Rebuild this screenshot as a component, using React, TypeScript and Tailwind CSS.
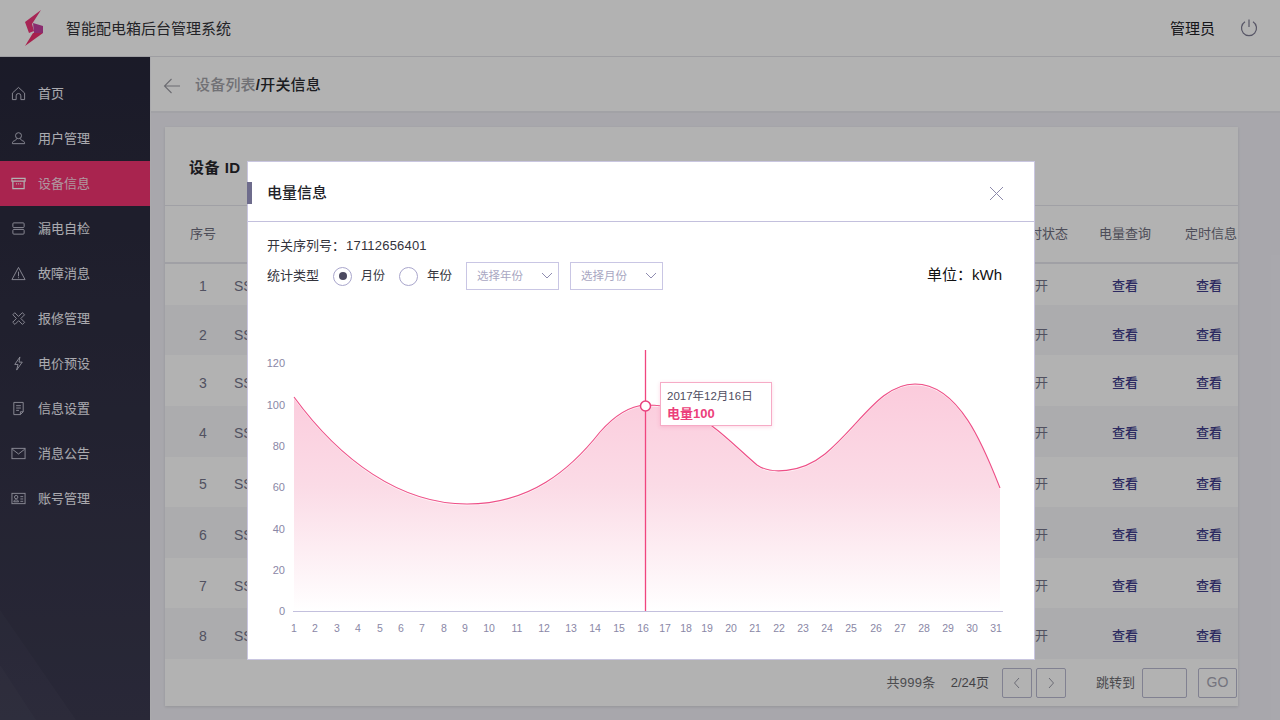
import React from "react";

const FONT = "font-['Liberation_Sans','Noto_Sans_CJK_SC',sans-serif]";

const LINE =
  "M294 397 C340 460 400 504 467 504 C530 504 570 470 600 432 C615 415 630 406 645 405 C670 405 690 410 712 426 C727 437 745 455 757 465 C770 474 800 474 825 454 C860 425 880 384 915 384 C960 384 985 450 1000 488";

const xLabels = [294, 315, 337, 358, 380, 401, 422, 444, 465, 489, 517, 544, 571, 595, 619, 643, 665, 686, 707, 731, 755, 779, 803, 827, 851, 876, 900, 924, 948, 972, 996];
const yLabels: [string, number][] = [["120", 363], ["100", 405], ["80", 446], ["60", 487], ["40", 529], ["20", 570], ["0", 611]];

function Chart() {
  return (
    <svg viewBox="248 300 786 359" className="block h-[359px] w-[786px]">
      <defs>
        <linearGradient id="area" x1="0" y1="384" x2="0" y2="611" gradientUnits="userSpaceOnUse">
          <stop offset="0" stopColor="#fbcbdc" />
          <stop offset="0.45" stopColor="#fbdbe6" />
          <stop offset="1" stopColor="#ffffff" />
        </linearGradient>
      </defs>
      <path d={`${LINE} L1000 611 L294 611 Z`} fill="url(#area)" />
      <path d={LINE} fill="none" stroke="#ffffff" strokeOpacity="0.7" transform="translate(0 1)" />
      <path d={LINE} fill="none" stroke="#ee4f87" strokeWidth="1.1" />
      <line x1="293" y1="611.5" x2="1003" y2="611.5" stroke="#c3c0dd" />
      <line x1="645.5" y1="350" x2="645.5" y2="611" stroke="#f0467f" strokeWidth="1.3" />
      <circle cx="645.5" cy="406" r="5" fill="#ffffff" stroke="#e8417d" strokeWidth="1.5" />
      {yLabels.map(([t, y]) => (
        <text key={t} x="285" y={y + 4} textAnchor="end" fontSize="11" fill="#8a87a6">{t}</text>
      ))}
      {xLabels.map((x, i) => (
        <text key={x} x={x} y="632" textAnchor="middle" fontSize="10.5" fill="#8a87a6">{i + 1}</text>
      ))}
    </svg>
  );
}

const stroke = { fill: "none", stroke: "currentColor", strokeWidth: 1 };
const icons: React.ReactNode[] = [
  <path {...stroke} d="M1.5 7.5 8 1.5l6.5 6v7h-4v-4a2.5 2.5 0 0 0-5 0v4h-4z" />,
  <g {...stroke}><circle cx="8" cy="5" r="3.2" /><path d="M5.8 8c0 1.5-1 2-3 2.8-1 .4-1.3 1.4-1.3 2.7h13c0-1.3-.3-2.3-1.3-2.7C11.200 10 10.200 9.500 10.200 8" /></g>,
  <g {...stroke} strokeWidth={1.3}><path d="M1 2.500h14v3H1z" /><path d="M2 5.500v8h12v-8" /><path d="M5.500 8.500h1M7.700 8.500h1M9.900 8.500h1" /></g>,
  <g {...stroke}><rect x="2" y="2" width="12" height="5" rx="1" /><rect x="2" y="9" width="12" height="5" rx="1" /></g>,
  <g {...stroke}><path d="M8 1.500 15 14.500H1z" /><path d="M8 6v5M8 12v1" /></g>,
  <g {...stroke}><path d="M2 4 4 1.800l4 4 4-4L14.500 4l-4 4 4 4-2.300 2.300-4-4-4 4L1.800 12l4-4z" /></g>,
  <g {...stroke}><path d="M9.500 1 4 9h3.500L6 15l6-8.500H8.500z" /></g>,
  <g {...stroke}><path d="M3 1.500h10v10l-3 3H3z" /><path d="M5.500 5h5M5.500 7.500h5M5.500 10h3M13 11.500h-3v3" /></g>,
  <g {...stroke}><rect x="1" y="2.500" width="14" height="11" /><path d="m1.500 3.500 6.500 5 6.500-5" /></g>,
  <g {...stroke}><rect x="1" y="2.500" width="14" height="11" /><circle cx="5.500" cy="6.500" r="1.800" /><path d="M3 11.500c0-1.500 1-2 2.500-2s2.500.5 2.500 2zM10 6h3M10 8.500h3M10 11h3" /></g>,
];

const nav = ["首页", "用户管理", "设备信息", "漏电自检", "故障消息", "报修管理", "电价预设", "信息设置", "消息公告", "账号管理"];

function Sidebar() {
  return (
    <aside className="relative w-[150px] shrink-0 overflow-hidden bg-gradient-to-b from-[#27273a] to-[#3b3a50] pt-[14px]">
      <svg className="absolute bottom-0 left-0 h-[110px] w-[80px]" viewBox="0 0 80 110">
        <polygon points="0,0 76,110 0,110" fill="#ffffff" fillOpacity="0.025" />
        <polygon points="0,55 36,110 0,110" fill="#ffffff" fillOpacity="0.025" />
      </svg>
      {nav.map((t, i) => (
        <div key={t} className={`relative flex h-[45px] items-center gap-[12px] pl-[11px] text-[13px] ${i === 2 ? "bg-[#f23472] text-[#fbd9e4]" : "text-[#f4f4fb]"}`}>
          <svg viewBox="0 0 16 16" className={`h-[15px] w-[15px] ${i === 2 ? "text-white" : "text-[#c9c9d8]"}`}>{icons[i]}</svg>
          <span>{t}</span>
        </div>
      ))}
    </aside>
  );
}

const rows: { n: number; cls: string }[] = [
  { n: 1, cls: "h-[41px] pt-[3px] bg-white" },
  { n: 2, cls: "h-[50px] pt-[10px] bg-[#f6f6f9]" },
  { n: 3, cls: "h-[51px] pt-[5px] bg-white" },
  { n: 4, cls: "h-[51px] pt-[3px] bg-[#f6f6f9]" },
  { n: 5, cls: "h-[50px] pt-[4px] bg-white" },
  { n: 6, cls: "h-[51px] pt-[5px] bg-[#f6f6f9]" },
  { n: 7, cls: "h-[50px] pt-[6px] bg-white" },
  { n: 8, cls: "h-[51px] pt-[5px] bg-[#f6f6f9]" },
];

function Table() {
  return (
    <div className="text-[13px]">
      <div className="flex h-[58px] items-center border-b-2 border-[#e6e6ec] text-[#6f6f80]">
        <span className="w-[77px] pl-[25px]">序号</span>
        <span className="flex-1" />
        <span className="w-[120px] text-right">定时状态</span>
        <span className="w-[84px] pl-[31px]">电量查询</span>
        <span className="w-[86px] whitespace-nowrap pl-[33px]">定时信息</span>
      </div>
      {rows.map((r) => (
        <div key={r.n} className={`flex items-center text-[#75758a] ${r.cls}`}>
          <span className="w-[69px] pl-[34px] text-[14px]">{r.n}</span>
          <span className="text-[14px]">SS</span>
          <span className="flex-1" />
          <span className="w-[77px]">开</span>
          <span className="w-[84px] font-medium text-[#3f3d8c]">查看</span>
          <span className="w-[42px] font-medium text-[#3f3d8c]">查看</span>
        </div>
      ))}
    </div>
  );
}

function Pager() {
  const box = "flex h-[30px] items-center justify-center rounded-[2px] border border-[#b9b9d0]";
  return (
    <div className="flex h-[47px] items-center justify-end pr-[1px] text-[13px] text-[#6d6d72]">
      <span className="tracking-[0.3px]">共999条</span>
      <span className="ml-[15px] text-[#5f5f66]">2/24页</span>
      <div className={`${box} ml-[13px] w-[30px]`}>
        <svg viewBox="0 0 12 12" className="h-[12px] w-[12px]"><path d="M8 1 3.500 6 8 11" fill="none" stroke="#9a9aa8" /></svg>
      </div>
      <div className={`${box} ml-[4px] w-[30px]`}>
        <svg viewBox="0 0 12 12" className="h-[12px] w-[12px]"><path d="m4 1 4.500 5L4 11" fill="none" stroke="#9a9aa8" /></svg>
      </div>
      <span className="ml-[30px]">跳转到</span>
      <div className={`${box} ml-[7px] w-[45px]`} />
      <div className={`${box} ml-[11px] w-[39px] text-[14px] text-[#a6a6b4]`}>GO</div>
    </div>
  );
}

function Select({ label }: { label: string }) {
  return (
    <div className="flex h-[28px] w-[93px] items-center justify-between border border-[#c9c6e4] pl-[10px] pr-[5px] text-[11.5px] text-[#a9a7c2]">
      <span className="pt-[1px]">{label}</span>
      <svg viewBox="0 0 12 8" className="h-[8px] w-[12px]"><path d="m1 1 5 5 5-5" fill="none" stroke="#8f8cb0" /></svg>
    </div>
  );
}

function Radio({ on }: { on?: boolean }) {
  return (
    <span className="flex h-[19px] w-[19px] items-center justify-center rounded-full border border-[#a9a6cc]">
      {on && <span className="h-[8px] w-[8px] rounded-full bg-[#4c4a60]" />}
    </span>
  );
}

function Modal() {
  return (
    <div className="absolute left-[248px] top-[162px] h-[497px] w-[786px] bg-white ring-1 ring-[#c9c6e0]">
      <span className="absolute left-[-1px] top-[20px] h-[22px] w-[5px] bg-[#6e6c8c]" />
      <div className="flex h-[60px] items-center justify-between border-b border-[#c3c0dd] pl-[19px] pr-[30px] pt-[3px]">
        <span className="text-[15px] font-medium text-[#222228]">电量信息</span>
        <svg viewBox="0 0 15 15" className="h-[15px] w-[15px]"><path d="m1 1 13 13M14 1 1 14" fill="none" stroke="#8c89ab" /></svg>
      </div>
      <div className="pl-[19px] pr-[32px] pt-[14px] text-[13px] text-[#33333c]">
        <div className="h-[20px] leading-[20px]">开关序列号：<span className="ml-[1px] tracking-[0.2px]">17112656401</span></div>
        <div className="mt-[6px] flex h-[28px] items-center">
          <span>统计类型</span>
          <span className="ml-[14px] mr-[9px]"><Radio on /></span>
          <span className="text-[12px]">月份</span>
          <span className="ml-[14px] mr-[9px]"><Radio /></span>
          <span className="text-[12.5px]">年份</span>
          <span className="ml-[14px]"><Select label="选择年份" /></span>
          <span className="ml-[11px]"><Select label="选择月份" /></span>
          <span className="ml-auto pb-[2px] text-[15px] text-[#111]">单位：kWh</span>
        </div>
      </div>
      <div className="absolute bottom-0 left-0">
        <Chart />
      </div>
      <div className="absolute left-[412px] top-[220px] h-[44px] w-[112px] border border-[#f6abc6] bg-white pl-[6px] pt-[4px] shadow-[0_1px_4px_rgba(236,63,123,0.2)]">
        <div className="text-[11.5px] leading-[18px] text-[#4f4d60]">2017年12月16日</div>
        <div className="text-[13px] font-bold leading-[18px] text-[#ec3f7b]">电量100</div>
      </div>
    </div>
  );
}

export default function App() {
  return (
    <div className={`relative flex h-screen w-screen flex-col overflow-hidden bg-[#f1f0f7] ${FONT}`}>
      <header className="flex h-[57px] shrink-0 items-center border-b border-[#e2e2e8] bg-white pl-[25px] pr-[22px]">
        <svg viewBox="25 10 18 36" className="h-[36px] w-[18px]">
          <polygon points="41,10 25,22 29,33 34,31 32,24" fill="#f0357a" />
          <polygon points="33,23 43,26 43,33 34,33" fill="#c6409f" />
          <polygon points="43,33 25,46 33,33" fill="#f0306e" />
        </svg>
        <span className="ml-[23px] pt-[2px] text-[15px] text-[#333338]">智能配电箱后台管理系统</span>
        <span className="ml-auto pt-[2px] text-[15px] text-[#222228]">管理员</span>
        <svg viewBox="0 0 18 18" className="ml-[25px] h-[18px] w-[18px]">
          <path d="M5 2.800a7.500 7.500 0 1 0 8 0M9 .5v7.500" fill="none" stroke="#7d7b93" strokeWidth="1.200" />
        </svg>
      </header>
      <div className="flex min-h-0 flex-1">
        <Sidebar />
        <main className="flex min-w-0 flex-1 flex-col border-l border-[#f4f4f8]">
          <div className="flex h-[56px] shrink-0 items-center border-b-2 border-[#e8e8ee] bg-white pl-[12px] pt-[3px] text-[15px] tracking-[0.2px]">
            <svg viewBox="0 0 18 16" className="h-[16px] w-[18px]">
              <path d="M17 8H1.500M8.500 1 1.500 8l7 7" fill="none" stroke="#9a9aa2" strokeWidth="1.100" />
            </svg>
            <span className="ml-[14px] font-medium text-[#a2a2a8]">设备列表</span>
            <span className="font-bold text-[#2a2a2e]">/</span>
            <span className="font-medium text-[#2a2a2e]">开关信息</span>
          </div>
          <div className="mx-[14px] mt-[14px] h-[579px] w-[1073px] bg-white shadow-[0_1px_3px_rgba(0,0,0,0.12)]">
            <div className="flex h-[79px] items-center border-b border-[#e6e6ec] pl-[24px] pt-[4px] text-[15px] font-bold tracking-[0.5px] text-[#26262c]">设备 ID</div>
            <Table />
            <Pager />
          </div>
        </main>
      </div>
      <div className="absolute inset-0 bg-black/30" />
      <Modal />
    </div>
  );
}
